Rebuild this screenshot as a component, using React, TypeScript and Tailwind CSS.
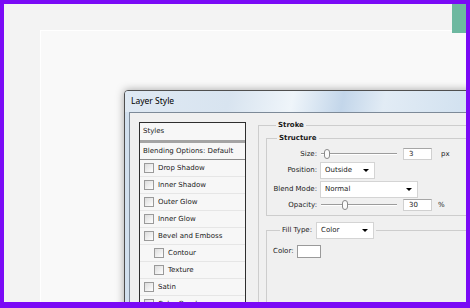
import React from 'react';

const items = [
  { label: 'Drop Shadow', indent: false },
  { label: 'Inner Shadow', indent: false },
  { label: 'Outer Glow', indent: false },
  { label: 'Inner Glow', indent: false },
  { label: 'Bevel and Emboss', indent: false },
  { label: 'Contour', indent: true },
  { label: 'Texture', indent: true },
  { label: 'Satin', indent: false },
  { label: 'Color Overlay', indent: false },
];

function Check() {
  return <span className="w-[10px] h-[10px] shrink-0 border border-[#9a9a9a] bg-[linear-gradient(135deg,#dcdcdc,#ffffff)]" />;
}

function Slider({ pos }: { pos: number }) {
  return (
    <div className="relative w-[76px] h-[12px] flex items-center">
      <div className="w-full h-[2px] border-t border-[#9c9c9c] border-b border-b-white" />
      <div
        className="absolute top-[1px] w-[6px] h-[10px] rounded-[3px] border border-[#8a8a8a] bg-[#fbfbfb]"
        style={{ left: pos }}
      />
    </div>
  );
}

function Select({ value, w }: { value: string; w: string }) {
  return (
    <div className={`${w} h-[17px] flex items-center justify-between pl-[4px] pr-[5px] bg-white border border-[#d4d4d4]`}>
      <span>{value}</span>
      <span className="w-0 h-0 border-l-[3px] border-r-[3px] border-t-[3px] border-l-transparent border-r-transparent border-t-black" />
    </div>
  );
}

function Field({ value }: { value: string }) {
  return (
    <div className="w-[29px] h-[12px] bg-white border border-[#d0d0d0] border-t-[#a6a6a6] pl-[5px] leading-[10px]">{value}</div>
  );
}

export default function App() {
  return (
    <div className="w-[470px] h-[308px] bg-[#7a0af6] pt-[4px] pl-[4px] pr-[4px] pb-[6px] font-['DejaVu_Sans',sans-serif] text-[7px] text-[#1a1a1a]">
      <div className="relative w-full h-full bg-[#f3f3f3] overflow-hidden flex">
        <div className="absolute top-0 right-0 w-[14px] h-[29px] bg-[#6db8a0]" />
        <div className="ml-[36px] mt-[26px] flex-1 bg-[#f9f9f9] border-t border-l border-white">
          <div className="ml-[83px] mt-[59px] w-[420px] h-[260px] border border-[#4f4f4f] rounded-tl-[4px] shadow-[0_0_8px_rgba(0,0,0,0.35)] bg-[#d2e0ee] flex flex-col">
            <div className="h-[21px] rounded-tl-[3px] flex items-center pl-[6px] bg-[linear-gradient(100deg,#dfe9f3_0%,#d8e4f0_25%,#eff5fa_40%,#c3d6ea_52%,#e2ecf5_62%,#d3e2f0_80%,#dae6f2_100%)] font-['Noto_Sans',sans-serif] text-[8.5px] text-black">
              Layer Style
            </div>
            <div className="flex-1 ml-[4px] border-t border-l border-[#7d8a98] bg-[#f0f0f0] flex items-start pl-[9px] pt-[9px]">
              <div className="w-[107px] border border-[#2e2e2e] bg-[#f7f7f7] flex flex-col">
                <div className="h-[17px] flex items-center pl-[3px]">Styles</div>
                <div className="h-[3px] bg-[#a4a4a4]" />
                <div className="h-[17px] flex items-center pl-[3px] border-b border-[#8c8c8c]">Blending Options: Default</div>
                {items.map((it) => (
                  <div
                    key={it.label}
                    className={`h-[17px] flex items-center gap-[4px] border-b border-[#e6e6e6] ${it.indent ? 'pl-[14px]' : 'pl-[4px]'}`}
                  >
                    <Check />
                    <span>{it.label}</span>
                  </div>
                ))}
              </div>

              <fieldset className="ml-[12px] -mt-[2px] w-[260px] h-[200px] border border-[#cdcdcd] pl-[7px]">
                <legend className="ml-[10px] px-[2px] leading-[10px] font-bold">Stroke</legend>
                <fieldset className="mt-[3px] border border-[#cdcdcd] pt-[4px] pb-[3px]">
                  <legend className="ml-[10px] px-[2px] leading-[10px] font-bold">Structure</legend>
                  <div className="h-[14px] flex items-center">
                    <span className="w-[50px] text-right">Size:</span>
                    <span className="ml-[4px]"><Slider pos={3} /></span>
                    <span className="ml-[6px]"><Field value="3" /></span>
                    <span className="ml-[9px]">px</span>
                  </div>
                  <div className="h-[19px] flex items-center">
                    <span className="w-[50px] text-right">Position:</span>
                    <span className="ml-[3px]"><Select value="Outside" w="w-[55px]" /></span>
                  </div>
                  <div className="h-[18px] flex items-center">
                    <span className="w-[50px] text-right">Blend Mode:</span>
                    <span className="ml-[3px]"><Select value="Normal" w="w-[98px]" /></span>
                  </div>
                  <div className="h-[14px] flex items-center">
                    <span className="w-[50px] text-right">Opacity:</span>
                    <span className="ml-[4px]"><Slider pos={21} /></span>
                    <span className="ml-[6px]"><Field value="30" /></span>
                    <span className="ml-[6px]">%</span>
                  </div>
                </fieldset>
                <fieldset className="mt-[6px] h-[90px] border border-[#cdcdcd] pl-[6px] pt-[6px]">
                  <legend className="ml-[7px] px-[2px] flex items-center gap-[4px]">
                    <span>Fill Type:</span>
                    <Select value="Color" w="w-[58px]" />
                  </legend>
                  <div className="h-[13px] flex items-center gap-[3px]">
                    <span>Color:</span>
                    <span className="w-[24px] h-[13px] bg-white border border-[#9a9a9a]" />
                  </div>
                </fieldset>
              </fieldset>
            </div>
          </div>
        </div>
      </div>
    </div>
  );
}
